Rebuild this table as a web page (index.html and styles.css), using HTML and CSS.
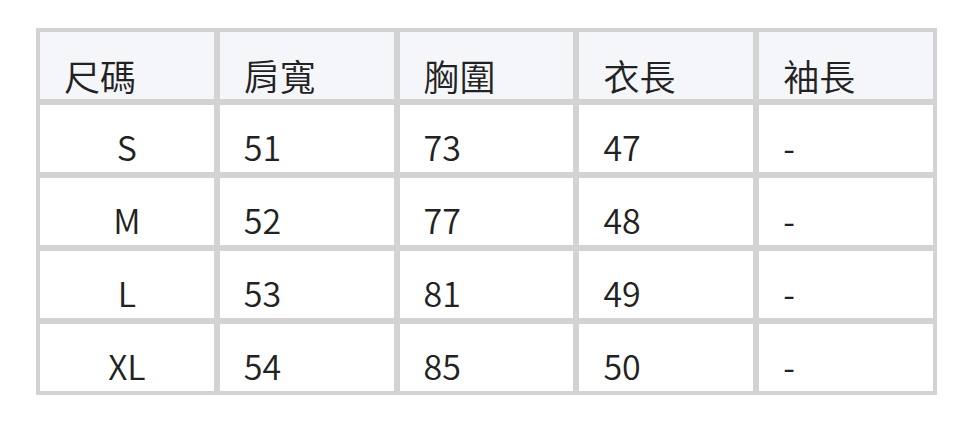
FILE: index.html
```html
<!DOCTYPE html>
<html lang="zh-Hant">
<head>
<meta charset="utf-8">
<link rel="stylesheet" href="styles.css">
</head>
<body>
<table class="size-table">
  <thead>
    <tr><th>尺碼</th><th>肩寬</th><th>胸圍</th><th>衣長</th><th>袖長</th></tr>
  </thead>
  <tbody>
    <tr><td class="size">S</td><td>51</td><td>73</td><td>47</td><td>-</td></tr>
    <tr><td class="size">M</td><td>52</td><td>77</td><td>48</td><td>-</td></tr>
    <tr><td class="size">L</td><td>53</td><td>81</td><td>49</td><td>-</td></tr>
    <tr><td class="size">XL</td><td>54</td><td>85</td><td>50</td><td>-</td></tr>
  </tbody>
</table>
</body>
</html>
```

FILE: styles.css
```css
html, body {
  margin: 0;
  padding: 0;
  background: #ffffff;
}
body {
  padding: 28px 0 0 36px;
  font-family: "Noto Sans CJK TC", "Noto Sans CJK SC", sans-serif;
  color: #222222;
}
.size-table {
  width: 901px;
  table-layout: fixed;
  border-collapse: separate;
  border-spacing: 0;
  border: 1px solid #d3d3d3;
}
.size-table th,
.size-table td {
  border: 3px solid #d3d3d3;
  font-size: 34px;
  font-weight: 350;
  line-height: 48px;
  padding: 18px 0 1px 24px;
  text-align: left;
  vertical-align: top;
}
.size-table th {
  background: #f5f6fa;
  font-size: 36px;
  padding-top: 19px;
  padding-bottom: 0;
}
.size-table td.size {
  text-align: center;
  padding-left: 0;
}
```
